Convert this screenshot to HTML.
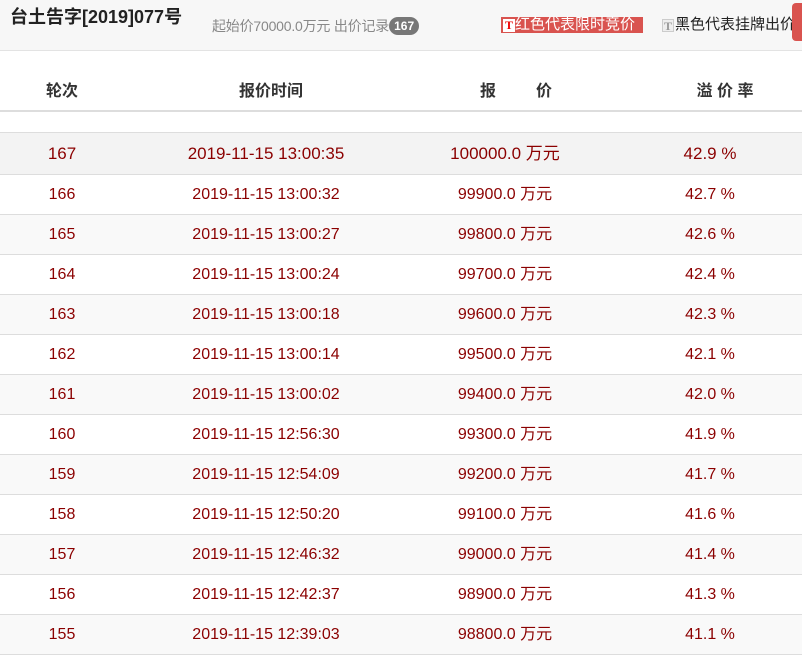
<!DOCTYPE html>
<html><head><meta charset="utf-8"><style>
*{margin:0;padding:0;box-sizing:border-box}
body{width:802px;height:646px;overflow:hidden;background:#fff;font-family:"Liberation Sans","Noto Sans CJK SC",sans-serif;position:relative}
.hd{position:absolute;left:0;top:0;width:802px;height:51px;background:#f7f7f7;border-bottom:1px solid #e3e3e3}
.t{position:absolute;left:10px;top:3px;font-size:18px;font-weight:bold;color:#222}
.s{position:absolute;left:212px;top:16px;font-size:14px;color:#888;letter-spacing:-0.2px}
.b{display:inline-block;background:#777;color:#fff;border-radius:9px;font-size:12px;font-weight:bold;padding:0 5px;height:18px;line-height:18px;vertical-align:1px;letter-spacing:0}
.red{position:absolute;left:501px;top:17px;width:142px;height:16px;background:#d9534f;color:#fff;font-size:15px;line-height:16px;padding-left:14px}
.ic{position:absolute;top:2px;width:12px;height:13px;font:bold 12px/13px "Liberation Serif",serif;text-align:center}
.blk{position:absolute;left:661px;top:16px;font-size:15px;color:#222;line-height:18px;padding-left:14px}
.btn{position:absolute;left:792px;top:3px;width:20px;height:38px;background:#d9534f;border-radius:4px}
.th{position:absolute;left:0;top:70px;width:802px;height:42px;border-bottom:2px solid #ddd;font-size:16px;font-weight:bold;color:#333}
.c{position:absolute;transform:translateX(-50%);white-space:nowrap}
.r{position:absolute;left:0;width:802px;border-bottom:1px solid #ddd;color:#8b0000;font-size:16px}
</style></head><body>
<div class="hd">
<div class="t">台土告字[2019]077号</div>
<div class="s">起始价70000.0万元 出价记录<span class="b">167</span></div>
<div class="red"><span class="ic" style="left:2px;background:#fff;color:#e00">T</span>红色代表限时竞价</div>
<div class="blk"><span class="ic" style="left:1px;background:#eee;color:#999;border:1px solid #ccc;top:3px">T</span>黑色代表挂牌出价</div>
<div class="btn"></div>
</div>
<div class="th" style="line-height:44px">
<span class="c" style="left:62px">轮次</span>
<span class="c" style="left:271px">报价时间</span>
<span class="c" style="left:516px">报&nbsp;&nbsp;&nbsp;&nbsp;&nbsp;&nbsp;&nbsp;&nbsp;&nbsp;价</span>
<span class="c" style="left:725px">溢 价 率</span>
</div>
<div class="r" style="top:132px;height:43px;line-height:42px;background:#f3f3f3;border-top:1px solid #ddd;font-size:17px">
<span class="c" style="left:62px">167</span><span class="c" style="left:266px">2019-11-15 13:00:35</span><span class="c" style="left:505px">100000.0 万元</span><span class="c" style="left:710px">42.9 %</span></div>
<div id="rows"></div>
<script>
var d=[["166","13:00:32","99900.0","42.7"],["165","13:00:27","99800.0","42.6"],["164","13:00:24","99700.0","42.4"],["163","13:00:18","99600.0","42.3"],["162","13:00:14","99500.0","42.1"],["161","13:00:02","99400.0","42.0"],["160","12:56:30","99300.0","41.9"],["159","12:54:09","99200.0","41.7"],["158","12:50:20","99100.0","41.6"],["157","12:46:32","99000.0","41.4"],["156","12:42:37","98900.0","41.3"],["155","12:39:03","98800.0","41.1"]];
var h="";d.forEach(function(r,i){h+='<div class="r" style="top:'+(175+40*i)+'px;height:40px;line-height:39px;background:'+(i%2?'#f9f9f9':'#fff')+'"><span class="c" style="left:62px">'+r[0]+'</span><span class="c" style="left:266px">2019-11-15 '+r[1]+'</span><span class="c" style="left:505px">'+r[2]+' 万元</span><span class="c" style="left:710px">'+r[3]+' %</span></div>'});
document.getElementById("rows").innerHTML=h;
</script>
</body></html>
